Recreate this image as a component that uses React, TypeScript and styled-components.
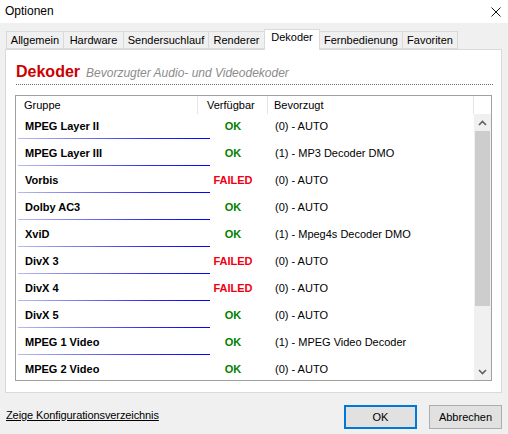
import React from "react";
import styled, { createGlobalStyle } from "styled-components";

const Global = createGlobalStyle`
  html, body { margin: 0; padding: 0; }
  body {
    background: #f0f0f0;
    font-family: "Liberation Sans", Arial, sans-serif;
    font-size: 11px;
    color: #000;
  }
  * { box-sizing: border-box; }
`;

const Window = styled.div`
  width: 508px;
  height: 434px;
  background: #f0f0f0;
  display: flex;
  flex-direction: column;
  overflow: hidden;
`;

const TitleBar = styled.div`
  height: 23px;
  background: #fff;
  display: flex;
  align-items: center;
  justify-content: space-between;
  padding: 0 7px 1px 5px;
  font-size: 12px;
`;

const CloseIcon = () => (
  <svg width="10" height="10" viewBox="0 0 10 10" style={{ marginTop: 1 }}>
    <path d="M0.5 0.5 L9.5 9.5 M9.5 0.5 L0.5 9.5" stroke="#111" strokeWidth="1" fill="none" />
  </svg>
);

const Body = styled.div`
  margin: 6px 6px 0 5px;
  display: flex;
  flex-direction: column;
`;

const TabStrip = styled.div`
  display: flex;
  align-items: flex-end;
  height: 20px;
  padding-left: 1px;
  position: relative;
  z-index: 1;
`;

const Tab = styled.div<{ $w: number; $active?: boolean }>`
  width: ${(p) => p.$w}px;
  height: ${(p) => (p.$active ? 21 : 18)}px;
  margin-left: -1px;
  margin-bottom: ${(p) => (p.$active ? -1 : 0)}px;
  border: 1px solid #d9d9d9;
  border-bottom: ${(p) => (p.$active ? "none" : "1px solid #d9d9d9")};
  background: ${(p) => (p.$active ? "#fff" : "#f0f0f0")};
  position: relative;
  z-index: ${(p) => (p.$active ? 2 : 1)};
  display: flex;
  justify-content: center;
  padding-top: ${(p) => (p.$active ? 1 : 2)}px;
  font-size: 11px;
  white-space: nowrap;
  &:first-child { margin-left: 0; }
`;

const Panel = styled.div`
  height: 344px;
  background: #fff;
  border: 1px solid #d9d9d9;
  padding: 11px 8px 0 9px;
  display: flex;
  flex-direction: column;
`;

const Heading = styled.div`
  margin-left: 1px;
  height: 23px;
  display: flex;
  align-items: center;
  gap: 6px;
  padding-bottom: 2px;
`;

const DottedRule = styled.div`
  margin-left: 1px;
  height: 1px;
  background: repeating-linear-gradient(to right, #6e6e6e 0 1px, transparent 1px 2px);
`;

const HeadTitle = styled.span`
  font-size: 16px;
  font-weight: bold;
  color: #cc0000;
`;

const HeadSub = styled.span`
  font-size: 12px;
  font-style: italic;
  color: #8c8c8c;
  padding-top: 2px;
`;

const ListBox = styled.div`
  margin-top: 10px;
  width: 477px;
  height: 286px;
  border: 1px solid #a0a0a0;
  display: flex;
  flex-direction: column;
  background: #fff;
`;

const HeaderRow = styled.div`
  display: grid;
  grid-template-columns: 182px 70px 206px 17px;
  height: 18px;
`;

const HeaderCell = styled.div<{ $pad: number; $sep?: boolean }>`
  padding-left: ${(p) => p.$pad}px;
  border-right: ${(p) => (p.$sep ? "1px solid #e5e5e5" : "none")};
  display: flex;
  align-items: center;
  font-size: 11px;
`;

const ListBody = styled.div`
  flex: 1;
  display: flex;
  min-height: 0;
`;

const Rows = styled.div`
  width: 458px;
  overflow: hidden;
`;

const Row = styled.div`
  display: grid;
  grid-template-columns: 182px 70px 206px;
  height: 27px;
  position: relative;
  &::after {
    content: "";
    position: absolute;
    left: 2px;
    top: 24px;
    width: 192px;
    height: 1px;
    background: linear-gradient(to right, #b8bcf2, #2a2af0 70%, #0000ff);
  }
`;

const Cell = styled.div<{ $align?: "center" | "left"; $pad?: number }>`
  height: 24px;
  display: flex;
  align-items: center;
  justify-content: ${(p) => (p.$align === "center" ? "center" : "flex-start")};
  padding-left: ${(p) => p.$pad ?? 0}px;
  white-space: nowrap;
  font-size: 11px;
`;

const GroupName = styled.span`
  font-weight: bold;
  color: #000;
`;

const Status = styled.span<{ $ok: boolean }>`
  font-weight: bold;
  color: ${(p) => (p.$ok ? "#008000" : "#f00010")};
`;

const Scrollbar = styled.div`
  width: 17px;
  background: #f0f0f0;
  display: flex;
  flex-direction: column;
`;

const ScrollButton = styled.div`
  height: 17px;
  display: flex;
  align-items: center;
  justify-content: center;
`;

const Track = styled.div`
  flex: 1;
  padding: 0 1px;
`;

const Thumb = styled.div`
  height: 175px;
  background: #cdcdcd;
`;

const Chevron = ({ up }: { up?: boolean }) => (
  <svg width="9" height="6" viewBox="0 0 9 6">
    <polyline
      points={up ? "1,5 4.5,1.5 8,5" : "1,1 4.5,4.5 8,1"}
      fill="none"
      stroke="#606060"
      strokeWidth="1.6"
    />
  </svg>
);

const Footer = styled.div`
  flex: 1;
  display: flex;
  align-items: flex-start;
  padding: 12px 6px 0 6px;
`;

const Link = styled.a`
  color: #000;
  text-decoration: underline;
  font-size: 11px;
  margin-top: 4px;
  letter-spacing: -0.1px;
  cursor: pointer;
`;

const Spacer = styled.div`
  flex: 1;
`;

const Button = styled.button<{ $default?: boolean }>`
  width: 73px;
  height: 24px;
  margin-left: 12px;
  background: #e1e1e1;
  border: ${(p) => (p.$default ? "2px solid #0078d7" : "1px solid #adadad")};
  font-family: "Liberation Sans", Arial, sans-serif;
  font-size: 11px;
  color: #000;
  padding: 0;
`;

const tabs: { label: string; w: number; active?: boolean }[] = [
  { label: "Allgemein", w: 58 },
  { label: "Hardware", w: 61 },
  { label: "Sendersuchlauf", w: 86 },
  { label: "Renderer", w: 57 },
  { label: "Dekoder", w: 56, active: true },
  { label: "Fernbedienung", w: 84 },
  { label: "Favoriten", w: 56 },
];

const decoders: { name: string; ok: boolean; pref: string }[] = [
  { name: "MPEG Layer II", ok: true, pref: "(0) - AUTO" },
  { name: "MPEG Layer III", ok: true, pref: "(1) - MP3 Decoder DMO" },
  { name: "Vorbis", ok: false, pref: "(0) - AUTO" },
  { name: "Dolby AC3", ok: true, pref: "(0) - AUTO" },
  { name: "XviD", ok: true, pref: "(1) - Mpeg4s Decoder DMO" },
  { name: "DivX 3", ok: false, pref: "(0) - AUTO" },
  { name: "DivX 4", ok: false, pref: "(0) - AUTO" },
  { name: "DivX 5", ok: true, pref: "(0) - AUTO" },
  { name: "MPEG 1 Video", ok: true, pref: "(1) - MPEG Video Decoder" },
  { name: "MPEG 2 Video", ok: true, pref: "(0) - AUTO" },
];

export default function App() {
  return (
    <Window>
      <Global />
      <TitleBar>
        <span>Optionen</span>
        <CloseIcon />
      </TitleBar>
      <Body>
        <TabStrip>
          {tabs.map((t) => (
            <Tab key={t.label} $w={t.w} $active={t.active}>
              {t.label}
            </Tab>
          ))}
        </TabStrip>
        <Panel>
          <Heading>
            <HeadTitle>Dekoder</HeadTitle>
            <HeadSub>Bevorzugter Audio- und Videodekoder</HeadSub>
          </Heading>
          <DottedRule />
          <ListBox>
            <HeaderRow>
              <HeaderCell $pad={8} $sep>Gruppe</HeaderCell>
              <HeaderCell $pad={9} $sep>Verfügbar</HeaderCell>
              <HeaderCell $pad={6} $sep>Bevorzugt</HeaderCell>
              <HeaderCell $pad={0} />
            </HeaderRow>
            <ListBody>
              <Rows>
                {decoders.map((d) => (
                  <Row key={d.name}>
                    <Cell $pad={9}>
                      <GroupName>{d.name}</GroupName>
                    </Cell>
                    <Cell $align="center">
                      <Status $ok={d.ok}>{d.ok ? "OK" : "FAILED"}</Status>
                    </Cell>
                    <Cell $pad={7}>{d.pref}</Cell>
                  </Row>
                ))}
              </Rows>
              <Scrollbar>
                <ScrollButton>
                  <Chevron up />
                </ScrollButton>
                <Track>
                  <Thumb />
                </Track>
                <ScrollButton>
                  <Chevron />
                </ScrollButton>
              </Scrollbar>
            </ListBody>
          </ListBox>
        </Panel>
      </Body>
      <Footer>
        <Link>Zeige Konfigurationsverzeichnis</Link>
        <Spacer />
        <Button $default>OK</Button>
        <Button>Abbrechen</Button>
      </Footer>
    </Window>
  );
}
